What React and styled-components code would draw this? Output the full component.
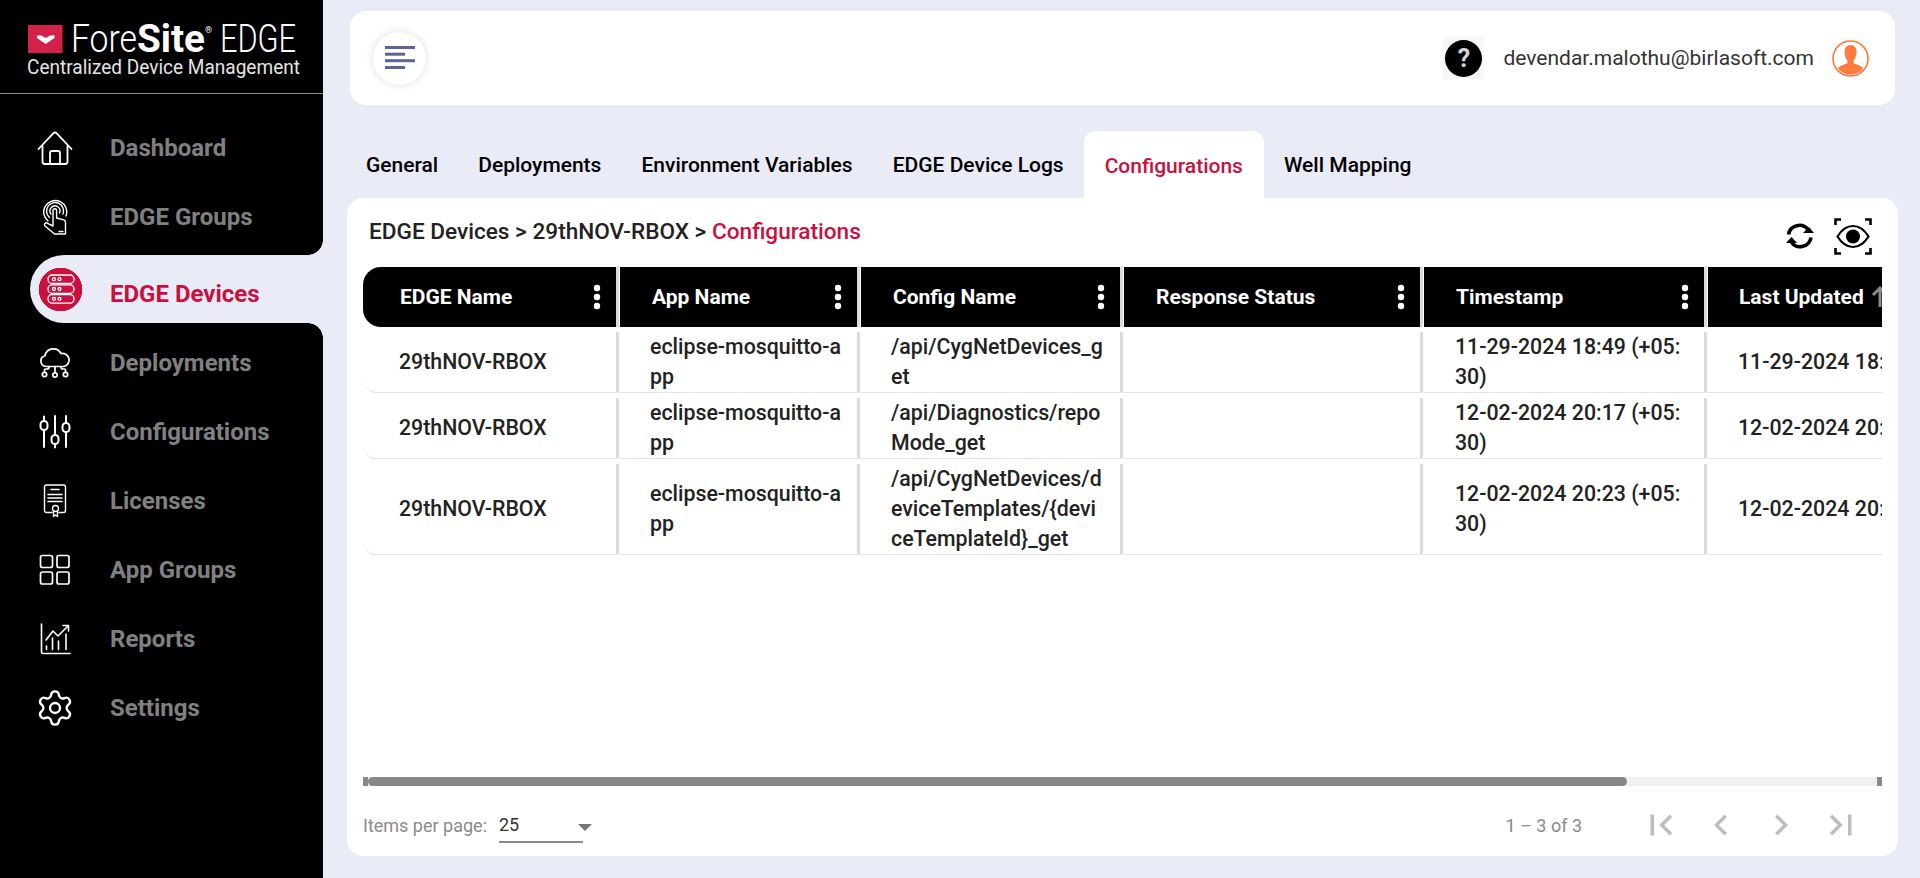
import React from "react";
import styled, { createGlobalStyle } from "styled-components";
import { Settings } from "lucide-react";

const MENU = [
  { label: "Dashboard", icon: <HomeIcon /> },
  { label: "EDGE Groups", icon: <TouchIcon /> },
  { label: "EDGE Devices", active: true, icon: <ServerIcon /> },
  { label: "Deployments", icon: <CloudIcon /> },
  { label: "Configurations", icon: <SlidersIcon /> },
  { label: "Licenses", icon: <LicenseIcon /> },
  { label: "App Groups", icon: <AppsIcon /> },
  { label: "Reports", icon: <ReportsIcon /> },
  { label: "Settings", icon: <Settings size={40} strokeWidth={1.4} color="#fff" /> },
];

const TABS = [
  "General",
  "Deployments",
  "Environment Variables",
  "EDGE Device Logs",
  "Configurations",
  "Well Mapping",
];

const COLUMNS = [
  { title: "EDGE Name", width: 257, left: 37, cellLeft: 36, right: 20 },
  { title: "App Name", width: 241, left: 32, cellLeft: 30, right: 12 },
  { title: "Config Name", width: 263, left: 32, cellLeft: 30, right: 16 },
  { title: "Response Status", width: 300, left: 32, cellLeft: 31, right: 16 },
  { title: "Timestamp", width: 284, left: 32, cellLeft: 31, right: 18 },
  { title: "Last Updated", width: 477, left: 31, cellLeft: 30, right: 16, sorted: true },
];

const ROWS = [
  [
    "29thNOV-RBOX",
    "eclipse-mosquitto-app",
    "/api/CygNetDevices_get",
    "",
    "11-29-2024 18:49 (+05:30)",
    "11-29-2024 18:49 (+05:30)",
  ],
  [
    "29thNOV-RBOX",
    "eclipse-mosquitto-app",
    "/api/Diagnostics/repoMode_get",
    "",
    "12-02-2024 20:17 (+05:30)",
    "12-02-2024 20:17 (+05:30)",
  ],
  [
    "29thNOV-RBOX",
    "eclipse-mosquitto-app",
    "/api/CygNetDevices/deviceTemplates/{deviceTemplateId}_get",
    "",
    "12-02-2024 20:23 (+05:30)",
    "12-02-2024 20:23 (+05:30)",
  ],
];

function HomeIcon() {
  return (
    <svg width="36" height="34" viewBox="0 0 36 34" fill="none" stroke="#fff" strokeWidth="1.8" strokeLinecap="round" strokeLinejoin="round">
      <path d="M1.5 18 L16.5 2.2 a2 2 0 0 1 3 0 L34.5 18" />
      <path d="M5.5 15 V30.5 a2.5 2.5 0 0 0 2.5 2.5 H28 a2.5 2.5 0 0 0 2.5 -2.5 V15" />
      <path d="M13 33 V22 a2 2 0 0 1 2 -2 h6 a2 2 0 0 1 2 2 V33" />
    </svg>
  );
}

function TouchIcon() {
  return (
    <svg width="26" height="36" viewBox="0 0 26 36" fill="none" stroke="#fff" strokeWidth="1.4" strokeLinecap="round" strokeLinejoin="round">
      <path d="M6 22 A11.5 11.5 0 1 1 24 17" />
      <path d="M7.5 18.5 A8.5 8.5 0 1 1 21 15" />
      <path d="M9 15 A5 5 0 1 1 17.5 14" />
      <path d="M11 20 V11.5 a1.8 1.8 0 0 1 3.6 0 V19 l6.5 1.6 a3 3 0 0 1 2.4 3 V35 H12.5 L3 27 a1.8 1.8 0 0 1 2.6 -2.6 L11 27 V20 z" fill="#000" />
      <path d="M17 32.5 h4" />
    </svg>
  );
}

function ServerIcon() {
  return (
    <svg width="30" height="32" viewBox="0 0 30 32" fill="none" stroke="#fff" strokeWidth="1.3">
      <rect x="2" y="2" width="26" height="8.5" rx="4" />
      <rect x="2" y="11.8" width="26" height="8.5" rx="4" />
      <rect x="2" y="21.6" width="26" height="8.5" rx="4" />
      <circle cx="8" cy="6.2" r="1.5" />
      <circle cx="13.5" cy="6.2" r="1.5" />
      <circle cx="8" cy="16" r="1.5" />
      <circle cx="13.5" cy="16" r="1.5" />
      <circle cx="8" cy="25.8" r="1.5" />
      <circle cx="13.5" cy="25.8" r="1.5" />
    </svg>
  );
}

function CloudIcon() {
  return (
    <svg width="32" height="32" viewBox="0 0 32 32" fill="none" stroke="#fff" strokeWidth="1.7" strokeLinecap="round" strokeLinejoin="round">
      <path d="M7 19.5 a5.5 5.5 0 0 1 -1 -10.8 A8.5 8.5 0 0 1 22 6.6 a6.5 6.5 0 0 1 3 12.9 H7 z" />
      <path d="M16 19.5 V26" />
      <path d="M10 19.5 V20 a2 2 0 0 1 -2 2 H6.5 a1 1 0 0 0 -1 1 V25" />
      <path d="M22 19.5 V20 a2 2 0 0 0 2 2 h1.5 a1 1 0 0 1 1 1 V25" />
      <circle cx="5.5" cy="27.5" r="2.2" fill="#000" />
      <circle cx="16" cy="28" r="2.2" fill="#000" />
      <circle cx="26.5" cy="27.5" r="2.2" fill="#000" />
    </svg>
  );
}

function SlidersIcon() {
  return (
    <svg width="32" height="34" viewBox="0 0 32 34" fill="none" stroke="#fff" strokeWidth="2" strokeLinecap="round">
      <path d="M5 1.5 V6 M5 15 V32" />
      <path d="M16 1 V20 M16 29 V32.5" />
      <path d="M27 1 V8 M27 17 V32" />
      <rect x="1.5" y="6" width="7" height="9" rx="3.5" />
      <rect x="12.5" y="20" width="7" height="9" rx="3.5" />
      <rect x="23.5" y="8" width="7" height="9" rx="3.5" />
    </svg>
  );
}

function LicenseIcon() {
  return (
    <svg width="24" height="34" viewBox="0 0 24 34" fill="none" stroke="#fff" strokeWidth="1.4" strokeLinecap="round" strokeLinejoin="round">
      <path d="M9 28.5 H3.5 a2 2 0 0 1 -2 -2 V3 a2 2 0 0 1 2 -2 H20.5 a2 2 0 0 1 2 2 V26.5 a2 2 0 0 1 -2 2 H16" />
      <path d="M8 5.5 H16" strokeWidth="1.6" />
      <path d="M5 10.5 H19 M5 14 H19 M5 17.5 H19" strokeWidth="1.6" />
      <circle cx="12.5" cy="24.5" r="3" />
      <path d="M10.5 27 V32.5 L12.5 31 L14.5 32.5 V27" />
    </svg>
  );
}

function AppsIcon() {
  return (
    <svg width="32" height="32" viewBox="0 0 32 32" fill="none" stroke="#fff" strokeWidth="1.7">
      <rect x="1.5" y="1.5" width="12" height="12" rx="2" />
      <rect x="18" y="1.5" width="12" height="12" rx="2" />
      <rect x="1.5" y="18" width="12" height="12" rx="2" />
      <rect x="18" y="18" width="12" height="12" rx="2" />
    </svg>
  );
}

function ReportsIcon() {
  return (
    <svg width="31" height="32" viewBox="0 0 31 32" fill="none" stroke="#fff" strokeWidth="1.6" strokeLinecap="round" strokeLinejoin="round">
      <path d="M1.5 1 V29 a1.5 1.5 0 0 0 1.5 1.5 H30" />
      <path d="M6 17 L13 8 L18 13 L28 3" />
      <path d="M23 2.5 H28.5 V8" />
      <path d="M6.5 26.5 V23 M12.5 26.5 V15 M18.5 26.5 V18 M26 26.5 V11" />
    </svg>
  );
}

function MenuIcon() {
  return (
    <svg width="30" height="24" viewBox="0 0 30 24" fill="#5b6596">
      <rect x="0" y="0" width="30" height="3" />
      <rect x="0" y="6.7" width="20" height="3" />
      <rect x="0" y="13.2" width="30" height="3" />
      <rect x="0" y="20" width="20" height="3" />
    </svg>
  );
}

function Avatar() {
  return (
    <svg width="37" height="37" viewBox="0 0 37 37">
      <defs>
        <clipPath id="avatarClip">
          <circle cx="18.5" cy="18.5" r="16" />
        </clipPath>
      </defs>
      <circle cx="18.5" cy="18.5" r="17.5" fill="#fff" stroke="#ff7a3c" strokeWidth="1.6" />
      <g clipPath="url(#avatarClip)" fill="#ff7a3c">
        <path d="M18.5 5 c4 0 6 3 6 7 c0 3.5 -1.5 7 -3 8.5 v2.5 c3 2 9.5 2.5 10 7 v8 h-26 v-8 c0.5 -4.5 7 -5 10 -7 v-2.5 c-1.5 -1.5 -3 -5 -3 -8.5 c0 -4 2 -7 6 -7 z" />
      </g>
    </svg>
  );
}

function SyncIcon() {
  return (
    <svg width="30" height="30" viewBox="0 0 30 30" fill="#000">
      <path d="M3.5 13.5 A11 11 0 0 1 23 8.5" fill="none" stroke="#000" strokeWidth="3.6" />
      <path d="M26 16.5 A11 11 0 0 1 6.5 21.5" fill="none" stroke="#000" strokeWidth="3.6" />
      <path d="M18 12 H29 L24 6 z" />
      <path d="M1 18 H12 L6.5 24 z" transform="rotate(180 6.5 20)" />
    </svg>
  );
}

function ScanEyeIcon() {
  return (
    <svg width="38" height="37" viewBox="0 0 38 37" fill="none" stroke="#000">
      <path d="M1.5 7 V1.5 H7 M31 1.5 H36.5 V7 M1.5 30 V35.5 H7 M31 35.5 H36.5 V30" strokeWidth="2.6" />
      <path d="M3.5 18.5 C9 9.5 14 8 19 8 C24 8 29 9.5 34.5 18.5 C29 27.5 24 29 19 29 C14 29 9 27.5 3.5 18.5 z" strokeWidth="2.2" />
      <circle cx="19" cy="18.5" r="7" fill="#000" stroke="none" />
    </svg>
  );
}

function Kebab() {
  return (
    <svg width="8" height="26" viewBox="0 0 8 26" fill="#fff">
      <circle cx="4" cy="4" r="3.2" />
      <circle cx="4" cy="13" r="3.2" />
      <circle cx="4" cy="22" r="3.2" />
    </svg>
  );
}

function SortArrow() {
  return (
    <svg width="18" height="22" viewBox="0 0 18 22" fill="none" stroke="#8a8a8a" strokeWidth="3">
      <path d="M9 21 V3 M2 9 L9 2 L16 9" />
    </svg>
  );
}

function PagerIcon({ d }) {
  return (
    <svg width="42" height="42" viewBox="0 0 24 24" fill="#bdbdbd">
      <path d={d} />
    </svg>
  );
}

function Logo() {
  return (
    <svg width="323" height="93" viewBox="0 0 323 93">
      <rect x="28" y="25" width="34.5" height="28" fill="#d2214a" />
      <path d="M37 35.5 L41.5 35.5 L45.7 38 L50 35.5 L54.5 35.5 L54.5 38 L45.7 44 L37 38 z" fill="#fff" />
      <LogoText x="71" y="52" fontSize="38" textLength="66" lengthAdjust="spacingAndGlyphs" $weight={300}>Fore</LogoText>
      <LogoText x="137" y="52" fontSize="38" textLength="68" lengthAdjust="spacingAndGlyphs" $weight={700}>Site</LogoText>
      <LogoText x="205" y="33" fontSize="9" $weight={400}>®</LogoText>
      <LogoText x="220" y="52" fontSize="38" textLength="76" lengthAdjust="spacingAndGlyphs" $weight={300}>EDGE</LogoText>
      <LogoText x="27" y="74" fontSize="21" textLength="273" lengthAdjust="spacingAndGlyphs" $weight={400} $fill="#e4e4e4">
        Centralized Device Management
      </LogoText>
    </svg>
  );
}

export default function App() {
  return (
    <Page>
      <GlobalStyle />
      <Sidebar>
        <LogoBar>
          <Logo />
        </LogoBar>
        <Nav>
          {MENU.map((item) => (
            <NavItem key={item.label} $active={item.active}>
              <NavIcon $active={item.active}>{item.icon}</NavIcon>
              <NavLabel $active={item.active}>{item.label}</NavLabel>
            </NavItem>
          ))}
        </Nav>
      </Sidebar>
      <Main>
        <TopBar>
          <MenuButton>
            <MenuIcon />
          </MenuButton>
          <UserArea>
            <HelpBox>
              <HelpCircle>?</HelpCircle>
            </HelpBox>
            <Email>devendar.malothu@birlasoft.com</Email>
            <Avatar />
          </UserArea>
        </TopBar>
        <Tabs>
          {TABS.map((tab) => (
            <Tab key={tab} $active={tab === "Configurations"}>
              {tab}
            </Tab>
          ))}
        </Tabs>
        <Card>
          <TitleRow>
            <Breadcrumb>
              EDGE Devices &gt; 29thNOV-RBOX &gt; <Crumb>Configurations</Crumb>
            </Breadcrumb>
            <Actions>
              <SyncIcon />
              <ScanEyeIcon />
            </Actions>
          </TitleRow>
          <TableClip>
            <Table>
              <colgroup>
                {COLUMNS.map((col) => (
                  <col key={col.title} width={col.width} />
                ))}
              </colgroup>
              <thead>
                <tr>
                  {COLUMNS.map((col, i) => (
                    <Th key={col.title}>
                      <HeadBox $left={col.left} $first={i === 0}>
                        <HeadTitle>
                          {col.title}
                          {col.sorted && <SortArrow />}
                        </HeadTitle>
                        {!col.sorted && <Kebab />}
                      </HeadBox>
                    </Th>
                  ))}
                </tr>
              </thead>
              <tbody>
                {ROWS.map((row, r) => (
                  <tr key={r}>
                    {row.map((value, i) => (
                      <Td key={i}>
                        <CellBox $left={COLUMNS[i].cellLeft} $right={COLUMNS[i].right} $first={i === 0} $nowrap={i === 5}>
                          <span>{value}</span>
                        </CellBox>
                      </Td>
                    ))}
                  </tr>
                ))}
              </tbody>
            </Table>
          </TableClip>
          <ScrollBar>
            <ScrollCap />
            <ScrollTrack>
              <ScrollThumb />
            </ScrollTrack>
            <ScrollCap />
          </ScrollBar>
          <Footer>
            <PageSize>
              <FooterText>Items per page:</FooterText>
              <Select>
                25
                <SelectArrow />
              </Select>
            </PageSize>
            <Pager>
              <FooterText>1 – 3 of 3</FooterText>
              <PagerButtons>
                <PagerIcon d="M18.41 16.59L13.82 12l4.59-4.59L17 6l-6 6 6 6zM6 6h2v12H6z" />
                <PagerIcon d="M15.41 7.41L14 6l-6 6 6 6 1.41-1.41L10.83 12z" />
                <PagerIcon d="M10 6L8.59 7.41 13.17 12l-4.58 4.59L10 18l6-6z" />
                <PagerIcon d="M5.59 7.41L10.18 12l-4.59 4.59L7 18l6-6-6-6zM16 6h2v12h-2z" />
              </PagerButtons>
            </Pager>
          </Footer>
        </Card>
      </Main>
    </Page>
  );
}

const GlobalStyle = createGlobalStyle`
  html, body {
    margin: 0;
    padding: 0;
    background: #e9ebf7;
    font-family: Roboto, "Liberation Sans", sans-serif;
  }
  * {
    box-sizing: border-box;
  }
`;

const Page = styled.div`
  display: flex;
  width: 100%;
  height: 100vh;
  overflow: hidden;
  background: #e9ebf7;
`;

const Sidebar = styled.aside`
  flex: 0 0 323px;
  background: #000;
  display: flex;
  flex-direction: column;
`;

const LogoBar = styled.div`
  height: 94px;
  border-bottom: 1px solid #8c8c8c;
  svg {
    display: block;
  }
`;

const LogoText = styled.text`
  font-family: Roboto, sans-serif;
  font-weight: ${(p) => p.$weight};
  fill: ${(p) => p.$fill || "#fff"};
`;

const Nav = styled.nav`
  display: flex;
  flex-direction: column;
  padding-top: 19.5px;
`;

const NavItem = styled.div`
  position: relative;
  display: flex;
  align-items: center;
  gap: ${(p) => (p.$active ? "19px" : "30px")};
  margin-left: 30px;
  height: ${(p) => (p.$active ? "68px" : "69px")};
  margin-top: ${(p) => (p.$active ? "3.5px" : "0")};
  margin-bottom: ${(p) => (p.$active ? "5.5px" : "0")};
  background: ${(p) => (p.$active ? "#e9ebf7" : "transparent")};
  border-radius: ${(p) => (p.$active ? "34px 0 0 34px" : "0")};
  ${(p) =>
    p.$active &&
    `
    &::before, &::after {
      content: "";
      position: absolute;
      right: 0;
      width: 15px;
      height: 15px;
    }
    &::before {
      top: -15px;
      background: radial-gradient(circle at 0 0, #000 14.5px, #e9ebf7 15px);
    }
    &::after {
      bottom: -15px;
      background: radial-gradient(circle at 0 100%, #000 14.5px, #e9ebf7 15px);
    }
  `}
`;

const NavIcon = styled.div`
  flex: 0 0 auto;
  width: ${(p) => (p.$active ? "61px" : "50px")};
  display: flex;
  justify-content: center;
  align-items: center;
  svg {
    display: block;
  }
  ${(p) =>
    p.$active &&
    `
    height: 43px;
    background: radial-gradient(circle at center, #c9103f 21.5px, transparent 22px);
  `}
`;

const NavLabel = styled.span`
  font-size: 24px;
  font-weight: 700;
  color: ${(p) => (p.$active ? "#c9103f" : "#808080")};
  padding-top: ${(p) => (p.$active ? "10px" : "0")};
`;

const Main = styled.main`
  flex: 1;
  min-width: 0;
  display: flex;
  flex-direction: column;
  padding: 11px 22px 22px 24px;
`;

const TopBar = styled.header`
  flex: 0 0 94px;
  margin: 0 3px;
  padding: 0 26px 0 23px;
  background: #fff;
  border-radius: 16px;
  display: flex;
  align-items: center;
  justify-content: space-between;
`;

const MenuButton = styled.div`
  width: 53px;
  height: 53px;
  border-radius: 50%;
  background: #fff;
  box-shadow: 0 0 9px rgba(0, 0, 0, 0.14);
  display: flex;
  align-items: center;
  justify-content: center;
`;

const UserArea = styled.div`
  display: flex;
  align-items: center;
  svg {
    display: block;
  }
`;

const HelpBox = styled.div`
  width: 41px;
  height: 42px;
  background: #f5f8fb;
  display: flex;
  align-items: center;
  justify-content: center;
`;

const HelpCircle = styled.div`
  width: 37px;
  height: 37px;
  border-radius: 50%;
  background: #000;
  color: #d4d4d4;
  font-size: 25px;
  font-weight: 700;
  line-height: 37px;
  text-align: center;
`;

const Email = styled.span`
  margin: 0 18px 0 19px;
  font-size: 21px;
  color: #333;
`;

const Tabs = styled.div`
  flex: 0 0 67px;
  margin-top: 26px;
  margin-left: -1px;
  display: flex;
`;

const Tab = styled.div`
  padding: ${(p) => (p.$active ? "2px 21px 0" : "0 20px")};
  display: flex;
  align-items: center;
  font-size: 21px;
  font-weight: 500;
  color: ${(p) => (p.$active ? "#c9103f" : "#000")};
  background: ${(p) => (p.$active ? "#fff" : "transparent")};
  border-radius: 12px 12px 0 0;
`;

const Card = styled.section`
  flex: 1;
  min-height: 0;
  background: #fff;
  border-radius: 16px;
  padding: 0 16px;
  display: flex;
  flex-direction: column;
`;

const TitleRow = styled.div`
  flex: 0 0 69px;
  display: flex;
  align-items: flex-start;
  justify-content: space-between;
  padding: 20px 10px 0 6px;
`;

const Breadcrumb = styled.div`
  font-size: 22.6px;
  font-weight: 500;
  line-height: 27px;
  color: #222;
`;

const Crumb = styled.span`
  color: #c9103f;
`;

const Actions = styled.div`
  display: flex;
  align-items: center;
  gap: 19px;
  svg {
    display: block;
  }
  svg:first-child {
    margin-bottom: 2px;
  }
`;

const TableClip = styled.div`
  flex: 1;
  min-height: 0;
  overflow: hidden;
`;

const Table = styled.table`
  width: 1822px;
  table-layout: fixed;
  border-collapse: separate;
  border-spacing: 0;
`;

const Th = styled.th`
  padding: 0;
  font-weight: 700;
`;

const HeadBox = styled.div`
  height: 60px;
  margin-right: 1.5px;
  padding: 0 15px 0 ${(p) => p.$left}px;
  background: #000;
  border-right: 3px solid #dcdcdc;
  border-radius: ${(p) => (p.$first ? "18px 0 0 18px" : "0")};
  display: flex;
  align-items: center;
  justify-content: space-between;
  color: #fff;
  svg {
    display: block;
  }
`;

const HeadTitle = styled.span`
  display: flex;
  align-items: center;
  gap: 7px;
  font-size: 21px;
  font-weight: 700;
  white-space: nowrap;
`;

const Td = styled.td`
  padding: 5px 0 0;
  vertical-align: top;
  height: 66px;
`;

const CellBox = styled.div`
  height: 100%;
  min-height: 61px;
  margin-right: 1.5px;
  padding: 0 ${(p) => p.$right}px 0 ${(p) => p.$left}px;
  border-right: 3px solid #dcdcdc;
  border-bottom: 1px solid #e2e2e2;
  border-bottom-left-radius: ${(p) => (p.$first ? "14px" : "0")};
  display: flex;
  align-items: center;
  font-size: 21.33px;
  font-weight: 500;
  line-height: 30px;
  color: #222;
  word-break: break-all;
  white-space: ${(p) => (p.$nowrap ? "nowrap" : "normal")};
`;

const ScrollBar = styled.div`
  flex: 0 0 9px;
  display: flex;
  background: #f0f0f0;
`;

const ScrollCap = styled.div`
  flex: 0 0 5px;
  background: #888;
`;

const ScrollTrack = styled.div`
  flex: 1;
`;

const ScrollThumb = styled.div`
  width: 83.4%;
  height: 100%;
  background: #888;
  border-radius: 5px;
`;

const Footer = styled.footer`
  flex: 0 0 70px;
  padding: 8px 20.5px 0 0;
  display: flex;
  align-items: center;
  justify-content: space-between;
`;

const PageSize = styled.div`
  display: flex;
  align-items: center;
  gap: 12px;
`;

const FooterText = styled.span`
  font-size: 18px;
  font-weight: 400;
  color: #8a8a8a;
`;

const Select = styled.div`
  position: relative;
  width: 84px;
  height: 36px;
  line-height: 36px;
  border-bottom: 2px solid #8a8a8a;
  font-size: 18px;
  color: #333;
`;

const SelectArrow = styled.span`
  position: absolute;
  left: 79px;
  top: 17px;
  width: 0;
  height: 0;
  border-left: 7px solid transparent;
  border-right: 7px solid transparent;
  border-top: 7px solid #777;
`;

const Pager = styled.div`
  display: flex;
  align-items: center;
  gap: 57.5px;
`;

const PagerButtons = styled.div`
  display: flex;
  gap: 18px;
  svg {
    display: block;
  }
`;
